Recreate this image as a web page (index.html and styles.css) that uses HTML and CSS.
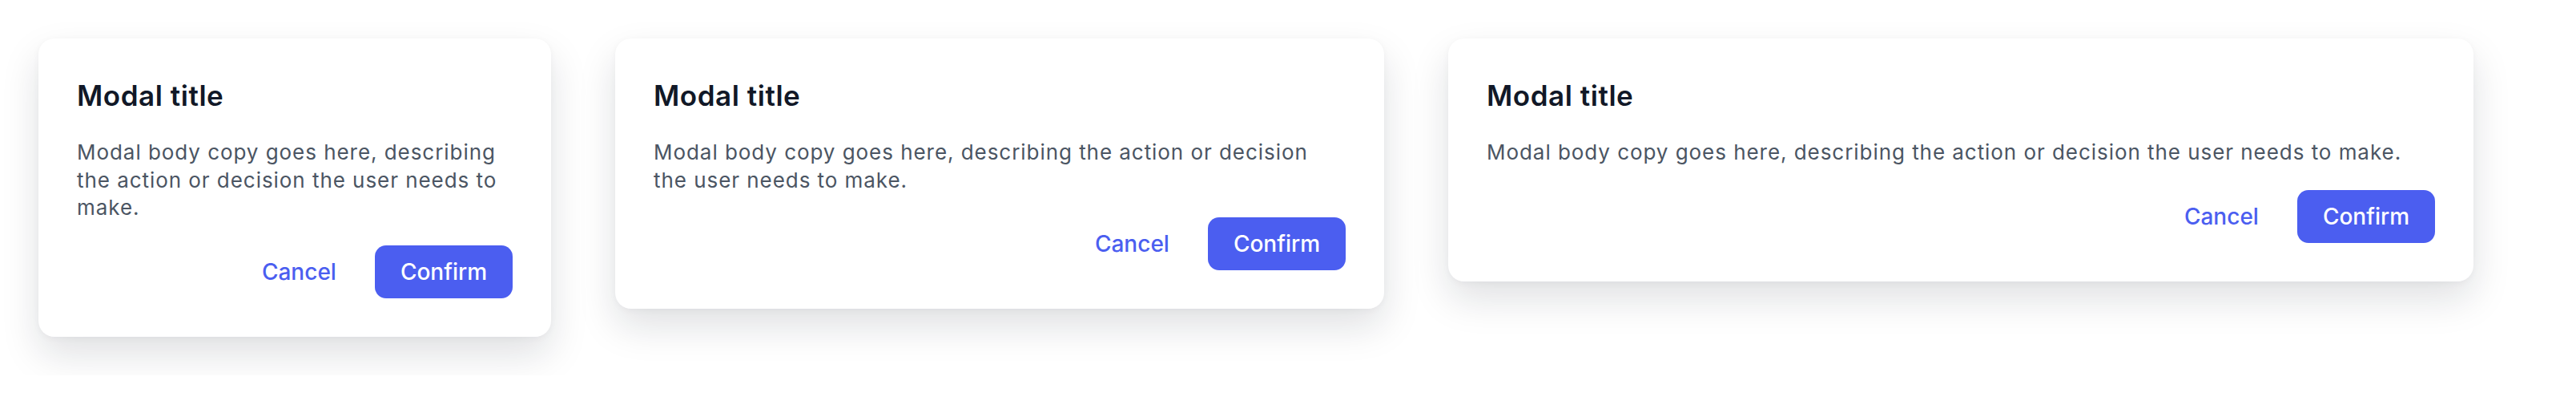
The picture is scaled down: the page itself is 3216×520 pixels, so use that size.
FILE: index.html
```html
<!DOCTYPE html>
<html lang="en">
  <head>
    <meta charset="UTF-8" />
    <meta name="viewport" content="width=device-width, initial-scale=1.0" />
    <title>Modals</title>

    <link rel="stylesheet" href="styles.css">
  </head>
  <body>
    <div class="modal-row">
      <div class="modal modal-sm">
        <h2 class="modal-title">Modal title</h2>
        <p class="modal-body">Modal body copy goes here, describing the action or decision the user needs to make.</p>
        <div class="modal-actions">
          <button class="btn btn-ghost">Cancel</button>
          <button class="btn btn-primary">Confirm</button>
        </div>
      </div>

      <div class="modal modal-md">
        <h2 class="modal-title">Modal title</h2>
        <p class="modal-body">Modal body copy goes here, describing the action or decision the user needs to make.</p>
        <div class="modal-actions">
          <button class="btn btn-ghost">Cancel</button>
          <button class="btn btn-primary">Confirm</button>
        </div>
      </div>

      <div class="modal modal-lg">
        <h2 class="modal-title">Modal title</h2>
        <p class="modal-body">Modal body copy goes here, describing the action or decision the user needs to make.</p>
        <div class="modal-actions">
          <button class="btn btn-ghost">Cancel</button>
          <button class="btn btn-primary">Confirm</button>
        </div>
      </div>
    </div>
  </body>
</html>
```

FILE: styles.css
```css
body {
  margin: 0;
  background: #fff;
  font-family: Inter, "Noto Sans", sans-serif;
}

.modal-row {
  display: flex;
  align-items: flex-start;
  gap: 80px;
  padding: 48px;
}

.modal {
  box-sizing: border-box;
  flex: none;
  background: #fff;
  border-radius: 20px;
  padding: 48px;
  box-shadow: 0 22px 48px rgba(17, 24, 39, 0.13), 0 2px 8px rgba(17, 24, 39, 0.04);
}

.modal-sm {
  width: 640px;
}

.modal-md {
  width: 960px;
}

.modal-lg {
  width: 1280px;
}

.modal-title {
  margin: 0;
  font-size: 35px;
  line-height: 46px;
  font-weight: 600;
  letter-spacing: 0.55px;
  color: #111827;
}

.modal-body {
  margin: 31px 0 0;
  font-size: 26px;
  line-height: 34.5px;
  letter-spacing: 0.95px;
  color: #4b5563;
}

.modal-actions {
  display: flex;
  justify-content: flex-end;
  gap: 16px;
  margin-top: 29px;
}

.btn {
  height: 66px;
  padding: 0 32px;
  border: 0;
  border-radius: 14px;
  font-family: inherit;
  font-size: 28px;
  font-weight: 500;
  cursor: pointer;
}

.btn-ghost {
  background: none;
  color: #4b5ef0;
}

.btn-primary {
  background: #4b5ef0;
  color: #fff;
}
```
